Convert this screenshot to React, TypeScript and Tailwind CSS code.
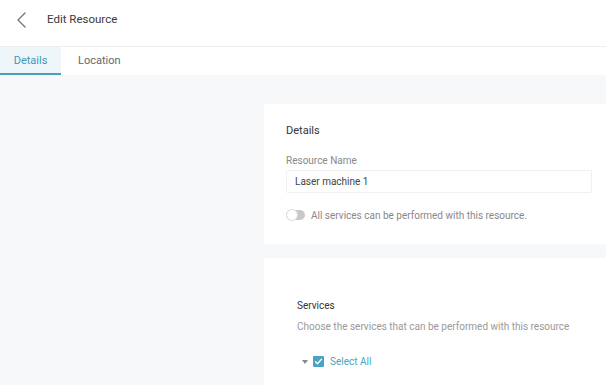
import React from 'react';

export default function App() {
  return (
    <div className="w-[606px] h-[385px] overflow-hidden bg-[#f7f8f9] text-[#333]" style={{ fontFamily: 'Roboto, "Noto Sans", sans-serif' }}>
      <header className="h-[47px] pb-[6px] bg-white border-b border-[#eeeeee] flex items-center">
        <button className="w-[40px] pl-[15px] text-[#777]">
          <svg width="14" height="18" viewBox="0 0 14 18" fill="none">
            <path d="M10 2L3 9l7 7" stroke="currentColor" strokeWidth="1.4" strokeLinecap="round" strokeLinejoin="round" />
          </svg>
        </button>
        <h1 className="ml-[7px] text-[11.5px] text-[#3a3a3a]">Edit Resource</h1>
      </header>
      <nav className="h-[28px] bg-white flex text-[11px]">
        <div className="w-[61px] flex items-center justify-center pt-[3px] bg-[#eef6fa] text-[#3f97b3] border-b-2 border-[#4a9fbb]">Details</div>
        <div className="px-[17px] pt-[1px] flex items-center text-[#666]">Location</div>
      </nav>
      <div className="flex">
        <div className="w-[264px] shrink-0" />
        <div className="flex-1 pt-[29px] flex flex-col gap-[14px]">
          <section className="bg-white h-[140px] pl-[22px] pr-[14px] pt-[19px]">
            <h2 className="text-[11px] text-[#333]">Details</h2>
            <label className="block mt-[13px] text-[10px] text-[#888]">Resource Name</label>
            <div className="mt-[2px] h-[23px] border border-[#f0f0f0] rounded-[2px] flex items-center pl-[8px] text-[10px] text-[#444]">Laser machine 1</div>
            <div className="mt-[15px] flex items-center gap-[6px]">
              <span className="w-[19px] h-[10px] rounded-full bg-[#c8c8c8] relative">
                <span className="absolute left-0 top-[-1px] w-[12px] h-[12px] rounded-full bg-white border border-[#ddd]" />
              </span>
              <span className="text-[10px] text-[#888]">All services can be performed with this resource.</span>
            </div>
          </section>
          <section className="bg-white h-[140px] pl-[33px] pt-[40px]">
            <h2 className="text-[10px] text-[#333]">Services</h2>
            <p className="mt-[6px] text-[10px] text-[#999]">Choose the services that can be performed with this resource</p>
            <div className="mt-[20px] flex items-center">
              <svg className="ml-[5px]" width="6" height="4" viewBox="0 0 6 4">
                <path d="M0 0h6L3 4z" fill="#888" />
              </svg>
              <span className="ml-[5px] w-[11px] h-[11px] rounded-[1px] bg-[#4aa3c0] flex items-center justify-center">
                <svg width="9" height="9" viewBox="0 0 9 9" fill="none">
                  <path d="M1.5 4.7l2 2L7.5 2.3" stroke="white" strokeWidth="1.4" strokeLinecap="round" strokeLinejoin="round" />
                </svg>
              </span>
              <span className="ml-[6px] text-[10px] text-[#4aa3c0]">Select All</span>
            </div>
          </section>
        </div>
      </div>
    </div>
  );
}
